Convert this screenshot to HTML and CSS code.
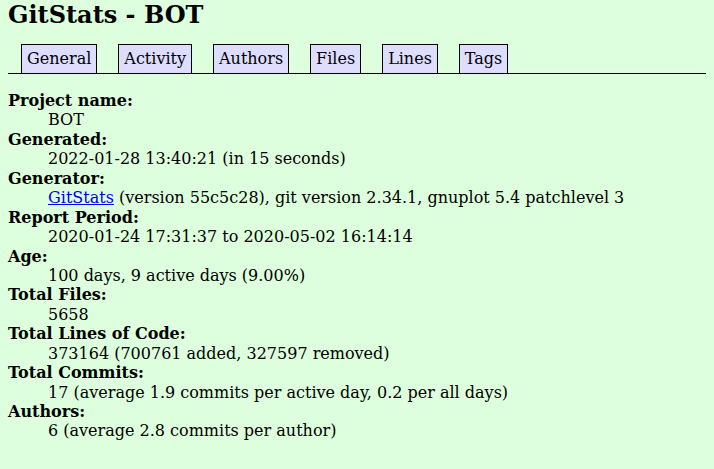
FILE: index.html
```html
<!DOCTYPE html>
<html>
<head>
<meta charset="utf-8">
<title>GitStats - BOT</title>
<link rel="stylesheet" href="styles.css">
</head>
<body>
<h1>GitStats - BOT</h1>
<div class="nav">
<ul>
<li><a href="#">General</a></li>
<li><a href="#">Activity</a></li>
<li><a href="#">Authors</a></li>
<li><a href="#">Files</a></li>
<li><a href="#">Lines</a></li>
<li><a href="#">Tags</a></li>
</ul>
</div>
<dl>
<dt>Project name</dt><dd>BOT</dd>
<dt>Generated</dt><dd>2022-01-28 13:40:21 (in 15 seconds)</dd>
<dt>Generator</dt><dd><a class="link" href="#">GitStats</a> (version 55c5c28), git version 2.34.1, gnuplot 5.4 patchlevel 3</dd>
<dt>Report Period</dt><dd>2020-01-24 17:31:37 to 2020-05-02 16:14:14</dd>
<dt>Age</dt><dd>100 days, 9 active days (9.00%)</dd>
<dt>Total Files</dt><dd>5658</dd>
<dt>Total Lines of Code</dt><dd>373164 (700761 added, 327597 removed)</dd>
<dt>Total Commits</dt><dd>17 (average 1.9 commits per active day, 0.2 per all days)</dd>
<dt>Authors</dt><dd>6 (average 2.8 commits per author)</dd>
</dl>
</body>
</html>
```
FILE: styles.css
```css
html, body {
  margin: 0;
}
body {
  color: black;
  background-color: #dfd;
  font-family: "DejaVu Serif", serif;
  font-size: 16px;
  padding: 0 8px;
}
h1 {
  font-size: 24px;
  font-weight: bold;
  margin: 0 0 14px;
}
.nav {
  height: 30px;
  border-bottom: 1px solid black;
  padding-left: 13px;
}
.nav ul {
  list-style: none;
  display: inline;
  margin: 0;
  padding: 0;
}
.nav li {
  float: left;
  list-style: none;
  position: relative;
  top: 1px;
  padding-right: 21px;
}
.nav li a {
  text-decoration: none;
  color: black;
  padding: 4px 5px 5px;
  line-height: 19px;
  border: 1px solid black;
  border-bottom: none;
  background-color: #ddf;
  display: block;
}
dl {
  margin: 17px 0;
  line-height: 19.44px;
}
dt {
  font-weight: bold;
  float: left;
  margin-right: 1em;
}
dt::after {
  content: ': ';
}
dd {
  display: block;
  clear: left;
  margin-left: 40px;
}
.link {
  color: #00e;
}
```
